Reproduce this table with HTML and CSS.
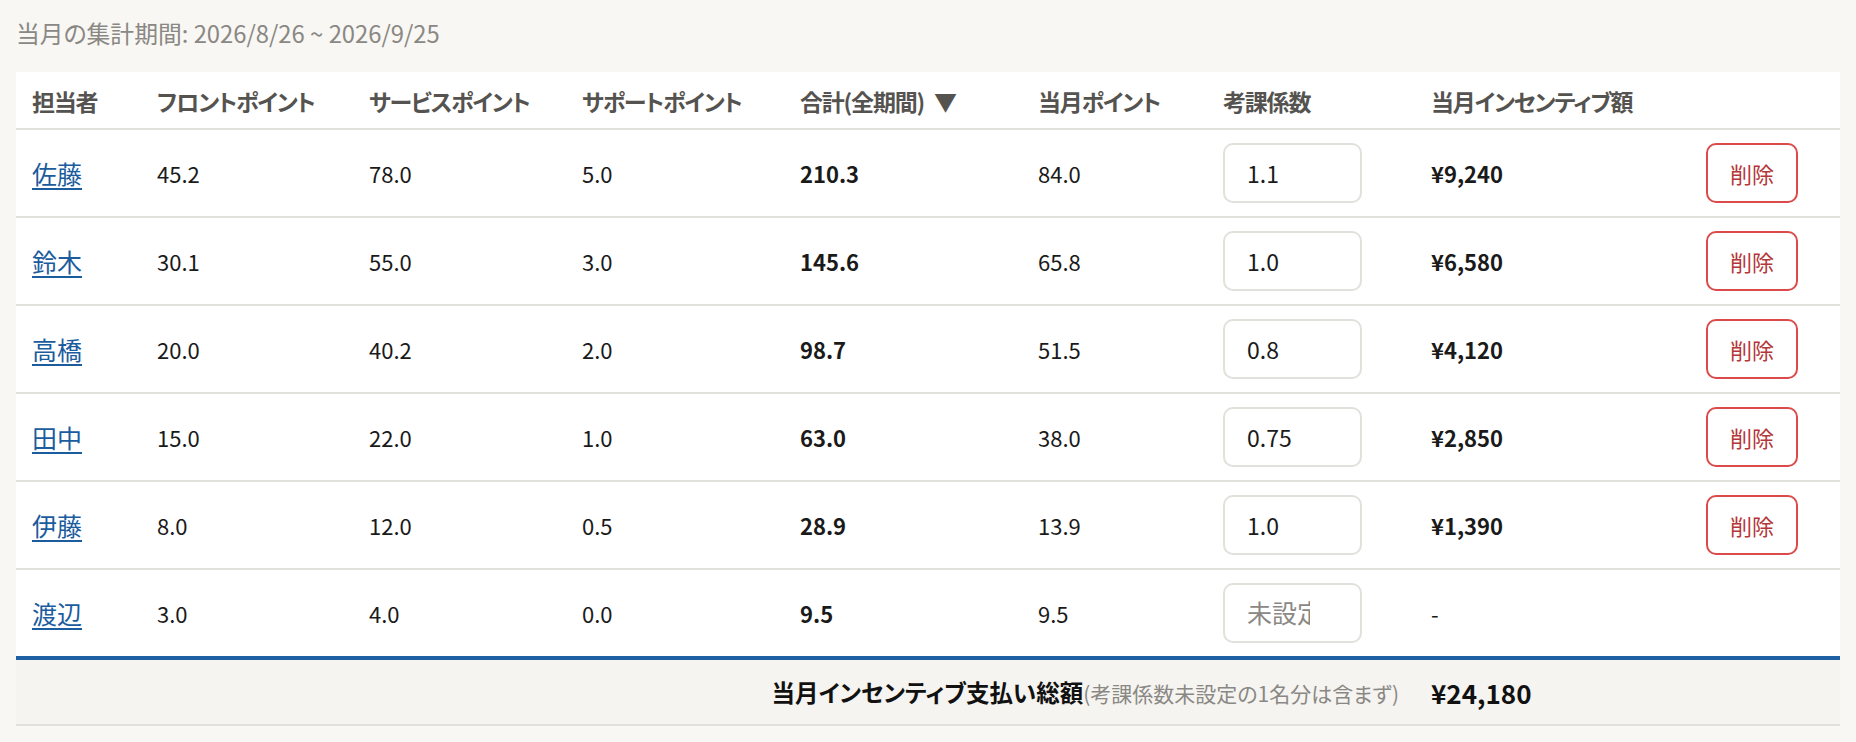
FILE: index.html
```html
<!DOCTYPE html>
<html lang="ja">
<head>
<meta charset="utf-8">
<title>インセンティブ</title>
<link rel="stylesheet" href="styles.css">
</head>
<body>
<div class="page">
  <p class="period">当月の集計期間: 2026/8/26 ~ 2026/9/25</p>
  <table class="inc-table">
    <colgroup>
      <col class="c-name"><col class="c-front"><col class="c-service"><col class="c-support"><col class="c-total"><col class="c-month"><col class="c-coef"><col class="c-amount"><col class="c-action">
    </colgroup>
    <thead>
      <tr>
        <th>担当者</th>
        <th>フロントポイント</th>
        <th>サービスポイント</th>
        <th>サポートポイント</th>
        <th>合計(全期間)<span class="sort">▼</span></th>
        <th>当月ポイント</th>
        <th>考課係数</th>
        <th>当月インセンティブ額</th>
        <th></th>
      </tr>
    </thead>
    <tbody>
      <tr>
        <td><a href="#" class="name">佐藤</a></td>
        <td>45.2</td><td>78.0</td><td>5.0</td><td class="strong">210.3</td><td>84.0</td>
        <td><input class="coef" type="number" value="1.1"></td>
        <td class="strong">¥9,240</td>
        <td><button class="del" type="button">削除</button></td>
      </tr>
      <tr>
        <td><a href="#" class="name">鈴木</a></td>
        <td>30.1</td><td>55.0</td><td>3.0</td><td class="strong">145.6</td><td>65.8</td>
        <td><input class="coef" type="number" value="1.0"></td>
        <td class="strong">¥6,580</td>
        <td><button class="del" type="button">削除</button></td>
      </tr>
      <tr>
        <td><a href="#" class="name">高橋</a></td>
        <td>20.0</td><td>40.2</td><td>2.0</td><td class="strong">98.7</td><td>51.5</td>
        <td><input class="coef" type="number" value="0.8"></td>
        <td class="strong">¥4,120</td>
        <td><button class="del" type="button">削除</button></td>
      </tr>
      <tr>
        <td><a href="#" class="name">田中</a></td>
        <td>15.0</td><td>22.0</td><td>1.0</td><td class="strong">63.0</td><td>38.0</td>
        <td><input class="coef" type="number" value="0.75"></td>
        <td class="strong">¥2,850</td>
        <td><button class="del" type="button">削除</button></td>
      </tr>
      <tr>
        <td><a href="#" class="name">伊藤</a></td>
        <td>8.0</td><td>12.0</td><td>0.5</td><td class="strong">28.9</td><td>13.9</td>
        <td><input class="coef" type="number" value="1.0"></td>
        <td class="strong">¥1,390</td>
        <td><button class="del" type="button">削除</button></td>
      </tr>
      <tr>
        <td><a href="#" class="name">渡辺</a></td>
        <td>3.0</td><td>4.0</td><td>0.0</td><td class="strong">9.5</td><td>9.5</td>
        <td><input class="coef" type="number" placeholder="未設定"></td>
        <td>-</td>
        <td></td>
      </tr>
    </tbody>
    <tfoot>
      <tr>
        <td colspan="7" class="total-label"><span class="label-main">当月インセンティブ支払い総額</span><span class="label-note">(考課係数未設定の1名分は含まず)</span></td>
        <td class="total-amount">¥24,180</td>
        <td></td>
      </tr>
    </tfoot>
  </table>
</div>
</body>
</html>
```

FILE: styles.css
```css
html, body {
  margin: 0;
  padding: 0;
  background: #f8f7f3;
}

body {
  font-family: "Noto Sans CJK JP", "Noto Sans", sans-serif;
  font-feature-settings: "palt";
  font-size: 22px;
  color: #1a1a1a;
}

.page {
  padding: 16px;
}

.period {
  margin: 0 0 22px;
  line-height: 34px;
  color: #8a8884;
  font-size: 23.8px;
}

.inc-table {
  width: 100%;
  table-layout: fixed;
  border-collapse: collapse;
  background: #ffffff;
}

.c-name { width: 125px; }
.c-front { width: 212px; }
.c-service { width: 213px; }
.c-support { width: 218px; }
.c-total { width: 238px; }
.c-month { width: 185px; }
.c-coef { width: 208px; }
.c-amount { width: 275px; }
.c-action { width: 150px; }

.inc-table th {
  text-align: left;
  font-weight: 700;
  color: #555350;
  font-size: 23px;
  letter-spacing: -1.2px;
  height: 54px;
  padding: 2px 16px 0;
  border-bottom: 2px solid #e1e0da;
  white-space: nowrap;
}

.sort {
  margin-left: 10px;
  letter-spacing: 0;
}

.inc-table td {
  height: 60px;
  padding: 13px 16px;
  white-space: nowrap;
  vertical-align: middle;
}

.inc-table tbody tr {
  border-bottom: 2px solid #e1e0da;
}

.inc-table tbody tr:last-child {
  border-bottom: none;
}

.strong {
  font-weight: 700;
}

.name {
  color: #1b5c9e;
  text-decoration: underline;
  text-underline-offset: 4px;
  font-size: 25px;
}

.coef {
  box-sizing: border-box;
  width: 139px;
  height: 60px;
  padding: 0 50px 0 22px;
  border: 2px solid #e1e0da;
  border-radius: 10px;
  background: #ffffff;
  font-family: inherit;
  font-feature-settings: "palt";
  font-size: 23px;
  color: #1a1a1a;
  outline: none;
  -moz-appearance: textfield;
}

.coef::-webkit-outer-spin-button,
.coef::-webkit-inner-spin-button {
  -webkit-appearance: none;
  margin: 0;
}

.coef::placeholder {
  color: #8a8884;
  font-size: 25px;
}

.del {
  box-sizing: border-box;
  width: 92px;
  height: 60px;
  border: 2px solid #dc4a4a;
  border-radius: 10px;
  background: #ffffff;
  color: #b5363a;
  font-family: inherit;
  font-size: 22px;
  padding: 0;
  cursor: pointer;
}

.inc-table tfoot tr {
  background: #f5f4f0;
  border-top: 4px solid #1f5fa3;
  border-bottom: 2px solid #e1e0da;
}

.inc-table tfoot td {
  height: 64px;
  padding: 0 16px;
}

.total-label {
  text-align: right;
}

.label-main {
  font-size: 23.5px;
  font-weight: 700;
  color: #111111;
}

.label-note {
  font-size: 21px;
  color: #8a8884;
}

.total-amount {
  font-weight: 700;
  font-size: 26px;
  color: #111111;
}
```
